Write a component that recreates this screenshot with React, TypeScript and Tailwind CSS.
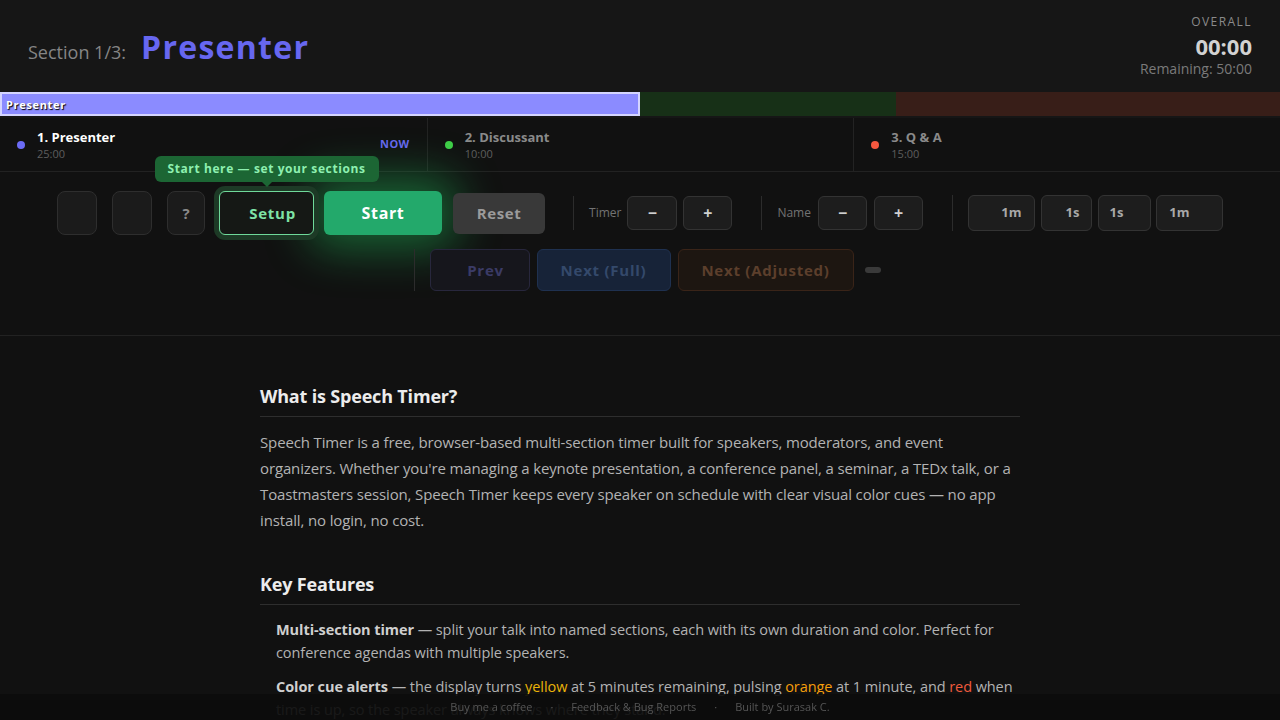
import React from 'react';

type Section = { name: string; time: string; dot: string; minutes: number; bar: string };

const sections: Section[] = [
  { name: '1. Presenter', time: '25:00', dot: 'bg-[#6b6bf5]', minutes: 25, bar: 'bg-[#8b8bff]' },
  { name: '2. Discussant', time: '10:00', dot: 'bg-[#3fce48]', minutes: 10, bar: 'bg-[#173017]' },
  { name: '3. Q & A', time: '15:00', dot: 'bg-[#f5583f]', minutes: 15, bar: 'bg-[#381e18]' },
];

const Sep: React.FC<{ className?: string }> = ({ className = '' }) => (
  <div className={`w-px bg-[#2c2c2c] ${className}`} />
);

const StepBtn: React.FC<{ label: string; className?: string }> = ({ label, className = '' }) => (
  <button className={`h-[34px] rounded-md border border-[#333] bg-[#1d1d1d] text-[16px] font-bold text-[#cfcfcf] ${className}`}>
    {label}
  </button>
);

const App: React.FC = () => {
  return (
    <div className="min-h-screen bg-[#111111] font-['Open_Sans',sans-serif] text-white">
      {/* header */}
      <header className="flex h-[90px] items-center justify-between bg-[#161616] px-7">
        <div className="flex items-baseline pt-[4px]">
          <span className="text-[18px] text-[#858585]">Section 1/3:</span>
          <span className="ml-[15px] text-[32px] font-bold tracking-[0.04em] text-[#6767f0]">Presenter</span>
        </div>
        <div className="flex flex-col items-end pt-[4px]">
          <span className="text-[12px] leading-[14px] tracking-[0.12em] text-[#8a8a8a]">OVERALL</span>
          <span className="mt-[4px] text-[22px] font-bold leading-[26px] text-[#d2d2d2]">00:00</span>
          <span className="text-[14px] leading-[20px] text-[#7a7a7a]">Remaining: 50:00</span>
        </div>
      </header>

      {/* progress bar */}
      <div className="flex h-[28px] border-y-2 border-[#161616] bg-[#111]">
        {sections.map((s, i) => (
          <div
            key={s.name}
            className={`${s.bar} h-full ${i === 0 ? 'border-2 border-[#d4d4ff]' : ''}`}
            style={{ width: `${(s.minutes / 50) * 100}%` }}
          >
            {i === 0 && (
              <span className="block pl-[4px] text-[11px] font-bold leading-[21px] tracking-[0.06em] text-white [text-shadow:1px_1px_1px_#000]">
                Presenter
              </span>
            )}
          </div>
        ))}
      </div>

      {/* section list */}
      <div className="grid grid-cols-3 border-b border-[#222]">
        {sections.map((s, i) => (
          <div key={s.name} className={`flex h-[53px] items-center pl-[17px] pr-[17px] ${i > 0 ? 'border-l border-[#232323]' : ''}`}>
            <span className={`h-[8px] w-[8px] rounded-full ${s.dot}`} />
            <div className="ml-[12px] flex flex-1 flex-col">
              <span className={`text-[13px] font-bold leading-[18px] ${i === 0 ? 'text-white' : 'text-[#8a8a8a]'}`}>{s.name}</span>
              <span className="text-[11px] leading-[15px] text-[#5e5e5e]">{s.time}</span>
            </div>
            {i === 0 && <span className="text-[11px] font-bold tracking-[0.04em] text-[#6767f0]">NOW</span>}
          </div>
        ))}
      </div>

      {/* controls */}
      <div className="border-b border-[#222] pb-[44px] pt-[19px]">
        <div className="flex items-center justify-center">
          <button className="h-[44px] w-[40px] rounded-lg border border-[#2e2e2e] bg-[#1b1b1b]" />
          <button className="ml-[15px] h-[44px] w-[40px] rounded-lg border border-[#2e2e2e] bg-[#1b1b1b]" />
          <button className="ml-[15px] h-[44px] w-[38px] rounded-lg border border-[#2e2e2e] bg-[#1b1b1b] text-[15px] font-bold text-[#8a8a8a]">
            ?
          </button>
          <div className="relative ml-[14px]">
            <div className="absolute bottom-[53px] left-1/2 w-[224px] -translate-x-1/2 rounded-md bg-[#1c6634] py-[4px] text-center text-[12px] font-bold leading-[18px] tracking-[0.05em] text-[#8ef0b0]">
              Start here — set your sections
              <span className="absolute left-1/2 top-full -translate-x-1/2 border-x-[5px] border-t-[5px] border-x-transparent border-t-[#1c6634]" />
            </div>
            <button className="h-[44px] w-[95px] rounded-md border-[1.5px] border-[#6fd99a] bg-[#151815] pl-[12px] text-[15px] font-bold tracking-[0.05em] text-[#7ee3a6] shadow-[0_0_0_5px_#1d3a26]">
              Setup
            </button>
          </div>
          <button className="ml-[10px] h-[44px] w-[118px] rounded-md bg-[#23a96b] text-[16px] font-bold tracking-[0.04em] text-white shadow-[0_0_45px_14px_rgba(34,197,94,0.45)]">
            Start
          </button>
          <button className="ml-[11px] h-[41px] w-[92px] rounded-md bg-[#393939] text-[15px] font-bold tracking-[0.04em] text-[#9b9b9b]">
            Reset
          </button>
          <Sep className="ml-[28px] h-[34px]" />
          <span className="ml-[15px] text-[12px] text-[#737373]">Timer</span>
          <StepBtn label="−" className="ml-[6px] w-[50px]" />
          <StepBtn label="+" className="ml-[6px] w-[49px]" />
          <Sep className="ml-[29px] h-[34px]" />
          <span className="ml-[15px] text-[12px] text-[#737373]">Name</span>
          <StepBtn label="−" className="ml-[7px] w-[49px]" />
          <StepBtn label="+" className="ml-[7px] w-[49px]" />
          <Sep className="ml-[29px] h-[36px]" />
          <button className="ml-[15px] h-[36px] w-[67px] rounded-md border border-[#333] bg-[#1d1d1d] pl-[20px] text-[13px] font-bold text-[#a8a8a8]">1m</button>
          <button className="ml-[6px] h-[36px] w-[51px] rounded-md border border-[#333] bg-[#1d1d1d] pl-[12px] text-[13px] font-bold text-[#a8a8a8]">1s</button>
          <button className="ml-[6px] h-[36px] w-[53px] rounded-md border border-[#333] bg-[#1d1d1d] pr-[16px] text-[13px] font-bold text-[#a8a8a8]">1s</button>
          <button className="ml-[5px] h-[36px] w-[67px] rounded-md border border-[#333] bg-[#1d1d1d] pr-[20px] text-[13px] font-bold text-[#a8a8a8]">1m</button>
        </div>

        <div className="mt-[14px] flex items-center justify-center pl-[14px]">
          <Sep className="h-[42px]" />
          <button className="ml-[15px] h-[42px] w-[100px] rounded-md border border-[#28273d] bg-[#16161c] pl-[12px] text-[15px] font-bold tracking-[0.05em] text-[#3b3b66]">
            Prev
          </button>
          <button className="ml-[7px] h-[42px] w-[134px] rounded-md border border-[#1f3150] bg-[#172338] text-[15px] font-bold tracking-[0.05em] text-[#34496b]">
            Next (Full)
          </button>
          <button className="ml-[7px] h-[42px] w-[176px] rounded-md border border-[#3a2418] bg-[#1d1611] text-[15px] font-bold tracking-[0.05em] text-[#5c3f2c]">
            Next (Adjusted)
          </button>
          <span className="ml-[11px] h-[6px] w-[16px] rounded-full bg-[#3a3a3a]" />
        </div>
      </div>

      {/* about */}
      <main className="mx-auto w-[760px] pb-[60px] pt-[47px]">
        <h2 className="border-b border-[#2e2e2e] pb-[6px] text-[18px] font-bold leading-[27px] tracking-[-0.01em] text-[#ececec]">
          What is Speech Timer?
        </h2>
        <p className="mt-[12px] text-[15px] leading-[26px] tracking-[-0.009em] text-[#b3b3b3]">
          Speech Timer is a free, browser-based multi-section timer built for speakers, moderators, and event organizers.
          Whether you're managing a keynote presentation, a conference panel, a seminar, a TEDx talk, or a Toastmasters
          session, Speech Timer keeps every speaker on schedule with clear visual color cues — no app install, no login, no
          cost.
        </p>

        <h2 className="mt-[38px] border-b border-[#2e2e2e] pb-[6px] text-[18px] font-bold leading-[27px] tracking-[-0.01em] text-[#ececec]">
          Key Features
        </h2>
        <ul className="mt-[13px] flex flex-col gap-[11px] pl-[16px] text-[14.5px] leading-[23px] tracking-[-0.005em] text-[#b3b3b3]">
          <li>
            <b className="text-[#cfcfcf]">Multi-section timer</b> — split your talk into named sections, each with its own
            duration and color. Perfect for conference agendas with multiple speakers.
          </li>
          <li>
            <b className="text-[#cfcfcf]">Color cue alerts</b> — the display turns <span className="text-[#eab308]">yellow</span> at
            5 minutes remaining, pulsing <span className="text-[#f59e0b]">orange</span> at 1 minute, and{' '}
            <span className="text-[#ef5a3c]">red</span> when time is up, so the speaker always knows where they stand.
          </li>
        </ul>
      </main>

      {/* footer */}
      <footer className="fixed inset-x-0 bottom-0 flex h-[26px] items-center justify-center gap-[18px] bg-[rgba(12,12,12,0.92)] text-[11px] text-[#565656]">
        <span>Buy me a coffee</span>
        <span>·</span>
        <span>Feedback &amp; Bug Reports</span>
        <span>·</span>
        <span>Built by Surasak C.</span>
      </footer>
    </div>
  );
};

export default App;
